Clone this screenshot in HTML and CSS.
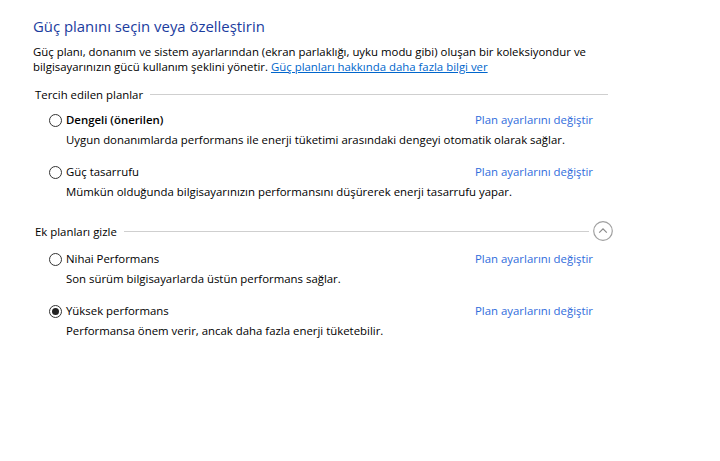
FILE: index.html
```html
<!DOCTYPE html>
<html lang="tr">
<head>
<meta charset="utf-8">
<link rel="stylesheet" href="styles.css">
</head>
<body>
<div class="page">
  <h1 class="title">Güç planını seçin veya özelleştirin</h1>
  <p class="intro">Güç planı, donanım ve sistem ayarlarından (ekran parlaklığı, uyku modu gibi) oluşan bir koleksiyondur ve<br>bilgisayarınızın gücü kullanım şeklini yönetir. <a class="more" href="#">Güç planları hakkında daha fazla bilgi ver</a></p>

  <div class="group-head">
    <span class="group-title">Tercih edilen planlar</span>
    <span class="rule"></span>
  </div>

  <div class="plan">
    <div class="plan-name"><span class="radio"></span><b>Dengeli (önerilen)</b></div>
    <a class="change" href="#">Plan ayarlarını değiştir</a>
    <div class="plan-desc">Uygun donanımlarda performans ile enerji tüketimi arasındaki dengeyi otomatik olarak sağlar.</div>
  </div>

  <div class="plan">
    <div class="plan-name"><span class="radio"></span>Güç tasarrufu</div>
    <a class="change" href="#">Plan ayarlarını değiştir</a>
    <div class="plan-desc">Mümkün olduğunda bilgisayarınızın performansını düşürerek enerji tasarrufu yapar.</div>
  </div>

  <div class="group-head group-extra">
    <span class="group-title">Ek planları gizle</span>
    <span class="rule"></span>
    <span class="chev"><svg width="20" height="20" viewBox="0 0 20 20"><circle cx="10" cy="10" r="9.3" fill="none" stroke="#a0a0a0" stroke-width="1.2"/><path d="M6.2 11.6 L10 7.8 L13.8 11.6" fill="none" stroke="#8a8a8a" stroke-width="1.2"/></svg></span>
  </div>

  <div class="plan">
    <div class="plan-name"><span class="radio"></span>Nihai Performans</div>
    <a class="change" href="#">Plan ayarlarını değiştir</a>
    <div class="plan-desc">Son sürüm bilgisayarlarda üstün performans sağlar.</div>
  </div>

  <div class="plan">
    <div class="plan-name"><span class="radio checked"></span>Yüksek performans</div>
    <a class="change" href="#">Plan ayarlarını değiştir</a>
    <div class="plan-desc">Performansa önem verir, ancak daha fazla enerji tüketebilir.</div>
  </div>
</div>
</body>
</html>
```
FILE: styles.css
```css
html, body {
  margin: 0;
  padding: 0;
  background: #fff;
}
body {
  font-family: "Open Sans", "Noto Sans", sans-serif;
  font-size: 11.4px;
  color: #000;
  width: 720px;
  height: 461px;
  overflow: hidden;
}
.page {
  padding: 16px 0 0 33px;
}
.title {
  margin: 0;
  font-weight: normal;
  font-size: 14.9px;
  line-height: 20px;
  color: #1b3c9e;
}
.intro {
  margin: 8px 0 0;
  line-height: 15px;
}
.more {
  color: #0066cc;
  text-decoration: underline;
}
.group-head {
  display: flex;
  align-items: center;
  width: 573px;
  margin: 12px 0 0 2px;
  height: 16px;
}
.group-title {
  padding-right: 7px;
}
.rule {
  flex: 1;
  height: 1px;
  background: #cfcfcf;
}
.group-extra {
  margin-top: 20px;
  width: 578px;
  height: 22px;
}
.chev {
  display: flex;
  margin-left: 4px;
}
.plan {
  display: grid;
  grid-template-columns: 426px auto;
  margin: 10px 0 0 16px;
  row-gap: 4px;
}
.group-extra + .plan {
  margin-top: 9px;
}
.plan + .plan {
  margin-top: 16px;
}
.plan-name {
  display: flex;
  align-items: center;
  line-height: 16px;
}
.plan-name b {
  font-weight: 600;
}
.radio {
  box-sizing: border-box;
  width: 13px;
  height: 13px;
  border: 1px solid #333;
  border-radius: 50%;
  margin-right: 4px;
  display: flex;
  align-items: center;
  justify-content: center;
}
.radio.checked::after {
  content: "";
  width: 7px;
  height: 7px;
  border-radius: 50%;
  background: #222;
}
.change {
  color: #2f6cdc;
  text-decoration: none;
  line-height: 16px;
}
.plan-desc {
  grid-column: 1 / 3;
  padding-left: 17px;
  line-height: 16px;
}
```
